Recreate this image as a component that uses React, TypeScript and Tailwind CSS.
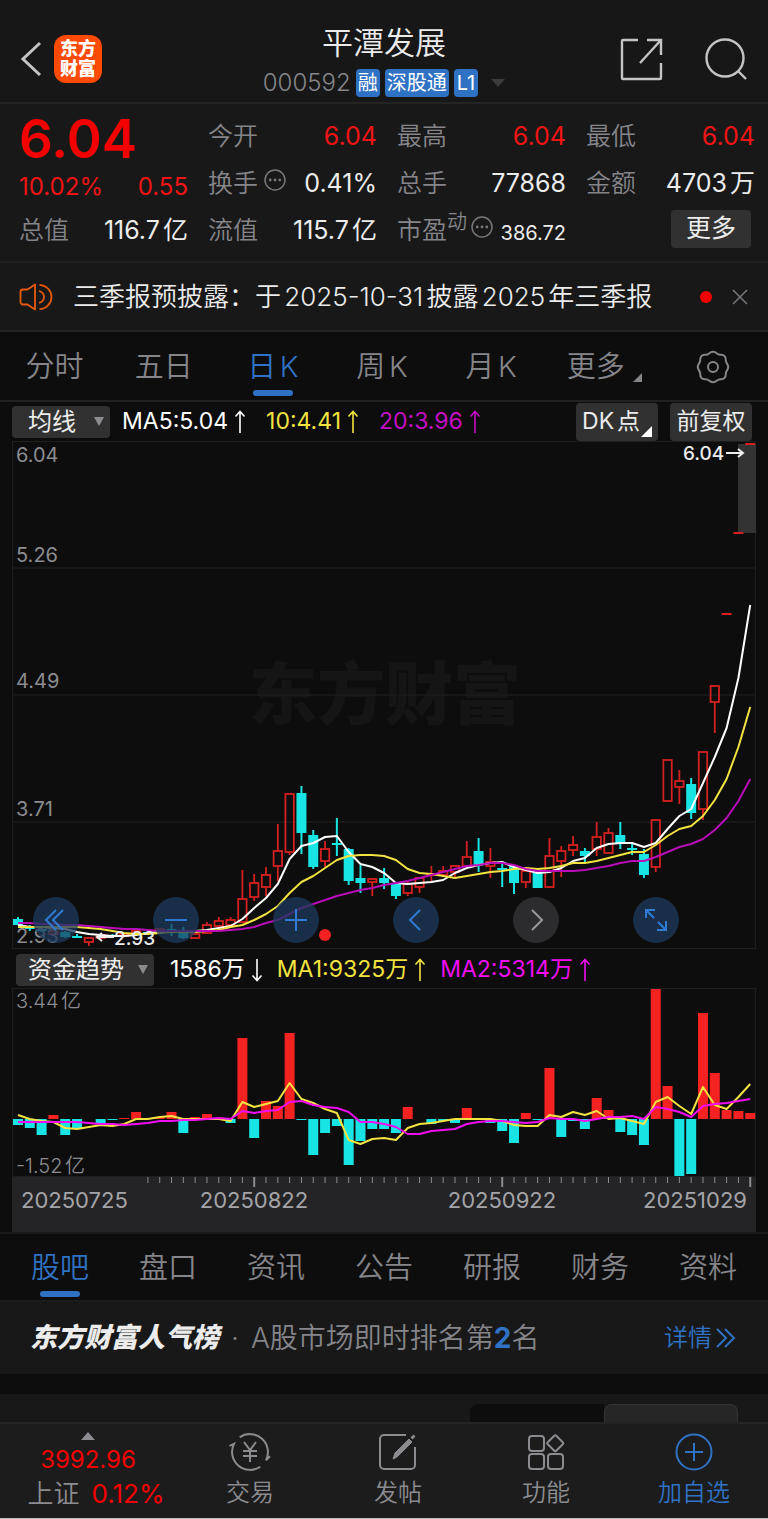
import { ReactNode } from 'react'

type Candle = [up: boolean, high: number, top: number, bottom: number, low: number]

const STEP = 11.81
const xAt = (i: number) => 6 + i * STEP

const candles: Candle[] = [
    [false, 476, 478, 484, 484], [false, 484, 485, 488, 490], [false, 487, 488, 490, 491], [true, 489, 490, 493, 493],
    [false, 490, 491, 496, 497], [false, 493, 495, 497, 497], [true, 496, 497, 501, 505], [true, 493, 494, 497, 498],
    [false, 493, 494, 496, 496], [true, 492, 493, 495, 496], [true, 489, 490, 493, 494], [false, 490, 491, 493, 494],
    [true, 487, 488, 490, 491], [false, 483, 488, 489, 495], [false, 486, 490, 497, 498], [true, 492, 493, 497, 498],
    [true, 481, 484, 492, 493], [true, 476, 480, 485, 486], [true, 476, 479, 484, 485], [true, 429, 458, 481, 482],
    [true, 433, 442, 456, 460], [true, 426, 434, 446, 455], [true, 383, 410, 425, 440], [true, 353, 353, 411, 414],
    [false, 345, 352, 392, 413], [false, 389, 394, 426, 428], [true, 400, 408, 420, 426], [false, 377, 402, 404, 415],
    [false, 407, 408, 440, 444], [false, 424, 437, 442, 452], [true, 437, 438, 441, 455], [false, 427, 437, 442, 448],
    [false, 441, 442, 455, 458], [true, 441, 443, 452, 455], [true, 436, 437, 446, 452], [true, 425, 433, 434, 440],
    [true, 425, 430, 434, 436], [true, 424, 425, 431, 436], [true, 400, 416, 425, 426], [false, 397, 410, 424, 431],
    [true, 407, 421, 425, 437], [false, 422, 427, 429, 446], [false, 424, 425, 442, 453], [true, 428, 430, 441, 447],
    [false, 430, 431, 447, 447], [true, 397, 415, 446, 447], [true, 405, 410, 420, 436], [true, 395, 404, 409, 415],
    [false, 407, 410, 415, 422], [true, 381, 396, 408, 415], [true, 387, 392, 412, 412], [false, 381, 394, 403, 408],
    [false, 402, 407, 409, 414], [false, 408, 413, 434, 437], [true, 378, 379, 426, 431], [true, 319, 319, 360, 361],
    [true, 329, 340, 346, 363], [false, 337, 343, 372, 378], [true, 311, 311, 368, 379], [true, 245, 245, 261, 292],
    [true, 173, 173, 173, 173], [true, 92, 92, 92, 92], [true, 3, 3, 3, 3],
]

const ma5 = [484, 486, 486, 487, 488, 491, 493, 494, 495, 495, 494, 492, 491, 490, 491, 490, 489, 487, 485, 478, 467, 457, 443, 418, 405, 402, 396, 395, 411, 423, 426, 432, 442, 443, 442, 441, 439, 432, 427, 424, 422, 421, 426, 429, 432, 431, 427, 420, 417, 407, 403, 402, 402, 406, 402, 388, 375, 368, 342, 316, 287, 237, 164]
const ma10 = [486, 486, 486, 486, 486, 486, 487, 488, 490, 492, 493, 493, 492, 491, 491, 491, 490, 489, 486, 484, 479, 473, 465, 452, 441, 435, 427, 419, 415, 414, 414, 415, 419, 428, 432, 433, 435, 437, 435, 433, 431, 430, 428, 427, 428, 427, 425, 422, 422, 420, 417, 414, 411, 411, 404, 395, 388, 385, 375, 359, 338, 306, 266]
const ma20 = [482, 482, 483, 483, 484, 484, 485, 486, 487, 488, 488, 489, 490, 490, 490, 490, 490, 490, 489, 488, 486, 482, 479, 473, 467, 463, 459, 455, 452, 449, 447, 444, 442, 440, 437, 434, 431, 428, 425, 424, 422, 422, 424, 428, 430, 430, 430, 430, 429, 427, 425, 422, 420, 420, 416, 411, 406, 403, 398, 389, 377, 360, 338]

const flow = [-6, -9, -16, 4, -16, -10, 0, -4, -1, 1, 7, 0, 2, 7, -14, 2, 5, 0, -4, 81, -19, 18, 13, 86, -1, -36, -14, -7, -46, -22, -10, -10, -14, 12, 0, -5, -2, -4, 11, -1, -4, -12, -24, 6, -1, 51, -18, -2, -10, 21, 9, -13, -16, -26, 130, 33, -57, -55, 106, 46, 9, 8, 6]
const flowMa1 = [127, 131, 133, 134, 140, 141, 139, 137, 138, 136, 131, 131, 129, 128, 131, 131, 131, 131, 133, 114, 119, 116, 113, 95, 111, 115, 121, 125, 152, 156, 151, 150, 152, 140, 136, 135, 133, 131, 131, 131, 131, 133, 137, 138, 138, 127, 129, 124, 127, 123, 131, 130, 133, 136, 114, 109, 118, 126, 99, 117, 121, 109, 96]
const flowMa2 = [134, 134, 134, 134, 134, 134, 135, 136, 136, 137, 136, 135, 133, 133, 132, 132, 131, 130, 131, 123, 125, 123, 122, 114, 113, 117, 119, 120, 124, 134, 134, 136, 139, 146, 146, 143, 142, 141, 136, 134, 133, 133, 134, 135, 134, 130, 131, 131, 133, 131, 129, 129, 128, 131, 119, 121, 124, 129, 118, 116, 115, 113, 111]

const toPoints = (values: number[]) => values.map((y, i) => `${xAt(i)},${y}`).join(' ')

function Arrow({ down }: { down?: boolean }) {
    return (
        <svg viewBox="0 0 12 24" className="h-6 w-3" fill="none" stroke="currentColor" strokeWidth="1.6">
            {down ? <path d="M6 1v21M1.5 17.5 6 22.5l4.5-5" /> : <path d="M6 23V2M1.5 6.5 6 1.5l4.5 5" />}
        </svg>
    )
}

function InfoDots() {
    return (
        <svg viewBox="0 0 22 22" className="mb-2 size-[22px] shrink-0" fill="none" stroke="#77777b" strokeWidth="1.5">
            <circle cx="11" cy="11" r="10" />
            <g fill="#77777b" stroke="none">
                <circle cx="6.2" cy="11" r="1.4" />
                <circle cx="11" cy="11" r="1.4" />
                <circle cx="15.8" cy="11" r="1.4" />
            </g>
        </svg>
    )
}

function Stat({ label, value, red, extra }: { label: string; value: string; red?: boolean; extra?: ReactNode }) {
    return (
        <div className="flex h-[47px] items-center justify-between whitespace-nowrap">
            <dt className="flex items-center gap-[6px] font-[350] text-[#85858a]">
                {label}
                {extra}
            </dt>
            <dd className={red ? 'text-[#f01414]' : 'text-[#ececec]'}>{value}</dd>
        </div>
    )
}

function Header() {
    return (
        <header className="grid h-[104px] grid-cols-[1fr_auto_1fr] items-center border-b-2 border-[#242424] bg-[#171717] px-5 pt-4">
            <div className="flex items-center gap-3">
                <button aria-label="返回">
                    <svg viewBox="0 0 22 36" className="h-9 w-[22px]" fill="none" stroke="#c4c4c4" strokeWidth="3">
                        <path d="M20 2 3 18l17 16" />
                    </svg>
                </button>
                <a href="#home" className="flex size-12 flex-col items-center justify-center rounded-xl bg-[#fd4a06] text-lg leading-5 font-black text-white">
                    <span>东方</span>
                    <span>财富</span>
                </a>
            </div>
            <div className="mt-1 flex flex-col items-center">
                <h1 className="text-[31px] leading-11 font-[350] text-[#ececec]">平潭发展</h1>
                <div className="flex h-9 items-center gap-[5px] text-xl text-white">
                    <span className="text-2xl font-light text-[#85858a]">000592</span>
                    <span className="rounded bg-[#2f72c3] px-0.5 leading-7">融</span>
                    <span className="rounded bg-[#2f72c3] px-0.5 leading-7">深股通</span>
                    <span className="rounded bg-[#2f72c3] px-[3px] leading-7">L1</span>
                    <svg viewBox="0 0 14 8" className="ml-2 h-2 w-3.5" fill="#3c3c3c">
                        <path d="M0 0h14L7 8z" />
                    </svg>
                </div>
            </div>
            <div className="flex items-center justify-end gap-10">
                <button aria-label="分享">
                    <svg viewBox="0 0 44 44" className="size-11" fill="none" stroke="#c4c4c4" strokeWidth="2.4">
                        <path d="M18 3H3a1 1 0 0 0-1 1v37a1 1 0 0 0 1 1h37a1 1 0 0 0 1-1V26M27 3h14v15M41 3 20 26" />
                    </svg>
                </button>
                <button aria-label="搜索">
                    <svg viewBox="0 0 44 44" className="size-11" fill="none" stroke="#c4c4c4" strokeWidth="2.4">
                        <circle cx="21" cy="21" r="18.5" />
                        <path d="m34 34 8 8" />
                    </svg>
                </button>
            </div>
        </header>
    )
}

function Quote() {
    return (
        <section className="grid grid-cols-4 gap-x-5 border-b-2 border-[#222] bg-[#181818] pt-[9px] pr-[13px] pb-[7px] pl-[19px] text-[25px] [text-autospace:normal]">
            <dl>
                <div className="flex h-[54px] items-center text-[53px] font-semibold text-[#f50000]">6.04</div>
                <div className="flex h-10 items-center justify-between text-2xl text-[#f01414]">
                    <span>10.02%</span>
                    <span>0.55</span>
                </div>
                <Stat label="总值" value="116.7亿" />
            </dl>
            <dl>
                <Stat label="今开" value="6.04" red />
                <Stat label="换手" value="0.41%" extra={<InfoDots />} />
                <Stat label="流值" value="115.7亿" />
            </dl>
            <dl>
                <Stat label="最高" value="6.04" red />
                <Stat label="总手" value="77868" />
                <div className="flex h-[47px] items-center justify-between whitespace-nowrap">
                    <dt className="flex items-center gap-1 font-[350] text-[#85858a]">
                        <span>
                            市盈<sup className="text-xl">动</sup>
                        </span>
                        <InfoDots />
                    </dt>
                    <dd className="pt-1 text-xl text-[#ececec]">386.72</dd>
                </div>
            </dl>
            <dl>
                <Stat label="最低" value="6.04" red />
                <Stat label="金额" value="4703万" />
                <div className="flex h-[47px] items-center justify-end pr-1 pb-1">
                    <button className="h-[38px] w-20 rounded bg-[#313131] text-[#ececec]">更多</button>
                </div>
            </dl>
        </section>
    )
}

function Notice() {
    return (
        <section className="flex h-[69px] items-center border-b-2 border-[#242424] bg-[#181818] pr-5 pl-[19px]">
            <svg viewBox="0 0 34 28" className="h-7 w-[34px] shrink-0" fill="none" stroke="#e8590c" strokeWidth="1.8">
                <path d="M16 1.5v25l-7.5-5H4A2.500 2.500 0 0 1 1.500 19V9A2.500 2.500 0 0 1 4 6.500h4.500z" strokeLinejoin="round" />
                <path d="M20 8c3.500 1 5 3.300 5 6s-1.500 5-5 6M20.500 1.800C28 2.500 32.500 8 32.500 14S28 25.500 20.500 26.200" />
            </svg>
            <p className="ml-5 flex-1 text-[26px] font-[350] whitespace-nowrap text-[#ececec] [text-autospace:normal]">三季报预披露：于2025-10-31披露2025年三季报</p>
            <span className="mr-5 size-3 rounded-full bg-[#f50000]" />
            <button aria-label="关闭">
                <svg viewBox="0 0 16 16" className="size-4" stroke="#77777b" strokeWidth="1.5">
                    <path d="m1 1 14 14M15 1 1 15" />
                </svg>
            </button>
        </section>
    )
}

function PeriodTabs() {
    return (
        <nav className="flex h-[70px] border-b-2 border-[#222] pt-0.5 text-[29px] font-[350] text-[#85858a] [text-autospace:normal]">
            {['分时', '五日', '日K', '周K', '月K'].map((name) => (
                <button key={name} className={name === '日K' ? 'relative flex-1 text-[#2f72c3]' : 'flex-1'}>
                    {name}
                    {name === '日K' && <span className="absolute bottom-1 left-1/2 h-[6px] w-10 -translate-x-1/2 rounded-full bg-[#2f72c3]" />}
                </button>
            ))}
            <button className="flex flex-1 items-center justify-center gap-2 pl-1">
                更多
                <svg viewBox="0 0 9 9" className="mt-5 size-[9px]" fill="#85858a">
                    <path d="M9 0v9H0z" />
                </svg>
            </button>
            <button aria-label="设置" className="flex flex-1 items-center justify-center">
                <svg viewBox="0 0 34 34" className="size-[34px]" fill="none" stroke="#85858a" strokeWidth="2" strokeLinejoin="round">
                    <path d="M13 3.500c2.500-2.200 5.500-2.200 8 0q1.800 1.500 3.800 1.300c3.500-.2 5 2.200 5 5.200q0 2 1.200 3.700c1.600 2.200 1.600 4.400 0 6.600q-1.200 1.700-1.200 3.700c0 3-1.500 5.400-5 5.200q-2-.2-3.800 1.300c-2.500 2.200-5.500 2.200-8 0q-1.800-1.500-3.800-1.300c-3.500.2-5-2.200-5-5.200q0-2-1.200-3.700c-1.600-2.200-1.600-4.400 0-6.600Q4.200 12 4.200 10c0-3 1.500-5.400 5-5.200q2 .2 3.800-1.300z" />
                    <circle cx="17" cy="17" r="5" />
                </svg>
            </button>
        </nav>
    )
}

function Picker({ label, option, wide }: { label: string; option: string; wide?: boolean }) {
    return (
        <span className="relative flex items-center">
            <select
                aria-label={label}
                className={`h-8 appearance-none rounded bg-[#313131] text-2xl leading-8 text-[#ececec] ${wide ? 'pr-[34px] pl-4' : 'pr-[30px] pl-3'}`}
            >
                <option>{option}</option>
            </select>
            <svg viewBox="0 0 10 9" className="pointer-events-none absolute right-[6px] h-[9px] w-[10px]" fill="#8c8c90">
                <path d="M0 0h10L5 9z" />
            </svg>
        </span>
    )
}

function PriceChart() {
    const grid = [127, 254, 381]
    return (
        <div className="relative mx-3">
            <svg viewBox="0 0 744 508" className="block w-full" fontFamily="Inter, sans-serif">
                <rect x="0.5" y="0.5" width="743" height="507" fill="none" stroke="#1e1e1e" />
                <text x="373" y="278" textAnchor="middle" fontSize="68" fontWeight="900" fill="#151515" fontFamily="Noto Sans CJK SC, sans-serif">东方财富</text>
                {grid.map((y) => (
                    <path key={y} d={`M0 ${y}h744`} stroke="#1b1b1b" strokeWidth="1.5" />
                ))}
                <rect x="726" y="3" width="18" height="89" fill="#333" />
                {candles.map(([up, high, top, bottom, low], i) => {
                    const x = xAt(i)
                    if (top === bottom) {
                        return <path key={i} d={`M${x - 5} ${top}h10`} stroke="#d42020" strokeWidth="2" />
                    }
                    return up ? (
                        <g key={i} fill="none" stroke="#d42020" strokeWidth="1.8">
                            <path d={`M${x} ${high}V${top}M${x} ${bottom}V${low}`} />
                            <rect x={x - 4.2} y={top} width="8.4" height={bottom - top} />
                        </g>
                    ) : (
                        <g key={i} fill="#18e4e4">
                            <rect x={x - 1} y={high} width="2" height={low - high} />
                            <rect x={x - 5} y={top} width="10" height={bottom - top} />
                        </g>
                    )
                })}
                <g fill="none" strokeWidth="2" strokeLinejoin="round">
                    <polyline points={toPoints(ma5)} stroke="#fff" />
                    <polyline points={toPoints(ma10)} stroke="#f2e340" />
                    <polyline points={toPoints(ma20)} stroke="#b80db8" />
                </g>
                <g fontSize="20" fill="#8c8c90">
                    <text x="4" y="21">6.04</text>
                    <text x="4" y="121">5.26</text>
                    <text x="4" y="247">4.49</text>
                    <text x="4" y="375">3.71</text>
                    <text x="4" y="502">2.93</text>
                </g>
                <g fontSize="19" fontWeight="500" fill="#ececec" stroke="none">
                    <text x="671" y="19">6.04</text>
                    <text x="102" y="504">2.93</text>
                </g>
                <g fill="none" stroke="#ececec" strokeWidth="2">
                    <path d="M714 12h16M726 8l5 4-5 4" />
                    <path d="M102 496H86M90 492l-5 4 5 4" />
                </g>
                <circle cx="313" cy="494" r="6" fill="#f52020" />
            </svg>
            <div className="absolute right-[77px] bottom-[6px] left-[21px] flex justify-between text-[#2f7bd4]">
                <ToolButton label="最早"><path d="M23 13l-10 10 10 10M30 13 20 23l10 10" /></ToolButton>
                <ToolButton label="缩小"><path d="M12 23h22" /></ToolButton>
                <ToolButton label="放大"><path d="M12 23h22M23 12v22" /></ToolButton>
                <ToolButton label="向前"><path d="M27 13 17 23l10 10" /></ToolButton>
                <ToolButton label="向后" muted><path d="m19 13 10 10-10 10" /></ToolButton>
                <ToolButton label="全屏"><path d="M13 21v-8h9M13 13l8 8M24 33h9v-9M33 33l-8-8" /></ToolButton>
            </div>
        </div>
    )
}

function ToolButton({ label, muted, children }: { label: string; muted?: boolean; children: ReactNode }) {
    return (
        <button aria-label={label} className={muted ? 'size-[46px] rounded-full bg-[#2c2c2e] text-[#98989c]' : 'size-[46px] rounded-full bg-[#1d3b5e]/75'}>
            <svg viewBox="0 0 46 46" fill="none" stroke="currentColor" strokeWidth="2">
                {children}
            </svg>
        </button>
    )
}

function FlowChart() {
    return (
        <div className="mx-3">
            <svg viewBox="0 0 744 189" className="block w-full" fontFamily="Inter, 'Noto Sans CJK SC', sans-serif">
                <rect x="0.5" y="0.5" width="743" height="188" fill="none" stroke="#1e1e1e" />
                {flow.map((v, i) => (
                    <rect key={i} x={xAt(i) - 5} y={v > 0 ? 131 - v : 131} width="10" height={Math.abs(v)} fill={v > 0 ? '#f52222' : '#18e4e4'} />
                ))}
                <g fill="none" strokeWidth="2" strokeLinejoin="round">
                    <polyline points={toPoints(flowMa1)} stroke="#f2e340" />
                    <polyline points={toPoints(flowMa2)} stroke="#f20df2" />
                </g>
                <g fontSize="20" fontWeight="350" fill="#8c8c90" className="[text-autospace:normal]">
                    <text x="4" y="20">3.44亿</text>
                    <text x="4" y="185">-1.52亿</text>
                </g>
            </svg>
            <svg viewBox="0 0 744 55" className="block w-full bg-[#242427]" fontFamily="Inter, sans-serif">
                {flow.map((_, i) => i > 10 && (
                    <path key={i} d={`M${xAt(i)} 0v${i % 21 === 20 ? 10 : 6}`} stroke="#8c8c90" strokeWidth={i % 21 === 20 ? 2 : 1} />
                ))}
                <g fontSize="22" fill="#a4a4a8">
                    <text x="9" y="31">20250725</text>
                    <text x="242" y="31" textAnchor="middle">20250822</text>
                    <text x="490" y="31" textAnchor="middle">20250922</text>
                    <text x="735" y="31" textAnchor="end">20251029</text>
                </g>
            </svg>
        </div>
    )
}

function BottomBar() {
    const item = 'flex flex-1 flex-col items-center gap-[5px] text-2xl font-[350]'
    return (
        <footer className="flex h-[97px] border-t-2 border-b border-t-[#242424] border-b-[#bdbdbd] bg-[#1c1c1c] pt-2 whitespace-nowrap text-[#8c8c90]">
            <a href="#index" className="flex w-44 flex-col items-center text-2xl text-[#f50000]">
                <svg viewBox="0 0 14 8" className="mb-0.5 h-2 w-3.5 shrink-0" fill="#8c8c90">
                    <path d="M7 0l7 8H0z" />
                </svg>
                <span className="leading-9">3992.96</span>
                <span className="flex items-center gap-3 pl-4 text-[26px] leading-8">
                    <span className="font-[350] text-[#8c8c90]">上证</span>
                    0.12%
                </span>
            </a>
            <button className={item}>
                <svg viewBox="0 0 44 40" className="h-10 w-11" fill="none" stroke="currentColor" strokeWidth="2">
                    <path d="M11.7 5.300A18 18 0 0 1 38 28.200l4-4M32.300 34.700A18 18 0 0 1 6 11.800l-4.500 2" />
                    <path d="m16 10 6 8 6-8M22 18v12M15 19h14M15 24h14" />
                </svg>
                交易
            </button>
            <button className={item}>
                <svg viewBox="0 0 40 40" className="size-10" fill="none" stroke="currentColor" strokeWidth="2">
                    <path d="M28 3H6a4 4 0 0 0-4 4v26a4 4 0 0 0 4 4h27a4 4 0 0 0 4-4V15" />
                    <path d="m15 27 2-6L31 7l3 3-15 15z" fill="currentColor" strokeWidth="1" />
                    <path d="m34 4 2 2" strokeWidth="4" />
                </svg>
                发帖
            </button>
            <button className={item}>
                <svg viewBox="0 0 40 40" className="size-10" fill="none" stroke="currentColor" strokeWidth="2">
                    <rect x="3" y="4" width="15" height="15" rx="3" />
                    <rect x="3" y="22" width="15" height="15" rx="3" />
                    <rect x="22" y="22" width="15" height="15" rx="3" />
                    <path d="M28.5 3.5a1 1 0 0 1 1.5 0l7 7a1 1 0 0 1 0 1.5l-7 7a1 1 0 0 1-1.5 0l-7-7a1 1 0 0 1 0-1.5z" />
                </svg>
                功能
            </button>
            <button className={`${item} text-[#2f72c3]`}>
                <svg viewBox="0 0 40 40" className="size-10" fill="none" stroke="currentColor" strokeWidth="2">
                    <circle cx="20" cy="20" r="17.5" />
                    <path d="M11 20h18M20 11v18" />
                </svg>
                加自选
            </button>
        </footer>
    )
}

export default function App() {
    return (
        <div className="min-w-[720px] bg-[#0d0d0d] font-[Inter,'Noto_Sans_CJK_SC',sans-serif]">
            <Header />
            <Quote />
            <Notice />
            <PeriodTabs />

            <div className="flex h-[39px] items-center pr-4 pl-3 text-[23px] whitespace-nowrap">
                <Picker label="主图指标" option="均线" wide />
                <span className="ml-3 flex items-center gap-[6px] text-white">MA5:5.04 <Arrow /></span>
                <span className="ml-5 flex items-center gap-[6px] text-[#f2e340]">10:4.41 <Arrow /></span>
                <span className="ml-5 flex items-center gap-[6px] text-[#c40fc4]">20:3.96 <Arrow /></span>
                <button className="relative ml-auto h-[38px] w-[82px] rounded bg-[#313131] pr-3 text-[#ececec] [text-autospace:normal]">
                    DK点
                    <svg viewBox="0 0 11 11" className="absolute right-[6px] bottom-1 size-[11px]" fill="#fff">
                        <path d="M11 0v11H0z" />
                    </svg>
                </button>
                <button className="ml-3 h-[38px] w-[82px] rounded bg-[#313131] text-[#ececec]">前复权</button>
            </div>
            <PriceChart />

            <div className="flex h-[39px] items-center pt-0.5 pl-4 text-[23px] whitespace-nowrap">
                <Picker label="副图指标" option="资金趋势" />
                <span className="ml-4 flex items-center gap-[6px] text-white">1586万 <Arrow down /></span>
                <span className="ml-[14px] flex items-center gap-[6px] text-[#f2e340]">MA1:9325万 <Arrow /></span>
                <span className="ml-[14px] flex items-center gap-[6px] text-[#f20df2]">MA2:5314万 <Arrow /></span>
            </div>
            <FlowChart />

            <nav className="flex h-[70px] border-y-2 border-[#1a1a1a] px-[6px] pt-0.5 text-[29px] font-[350] text-[#85858a]">
                {['股吧', '盘口', '资讯', '公告', '研报', '财务', '资料'].map((name) => (
                    <button key={name} className={name === '股吧' ? 'relative flex-1 text-[#2f72c3]' : 'flex-1'}>
                        {name}
                        {name === '股吧' && <span className="absolute bottom-[3px] left-1/2 h-[6px] w-10 -translate-x-1/2 rounded-full bg-[#2f72c3]" />}
                    </button>
                ))}
            </nav>

            <section className="flex h-[72px] items-center bg-[#181818] pr-8 pl-[30px] text-[28px] font-[350] whitespace-nowrap text-[#85858a]">
                <strong className="text-[27px] font-black text-[#ececec] italic">东方财富人气榜</strong>
                <span className="mx-3">·</span>
                <span>A股市场即时排名第<b className="font-bold text-[#2f72c3]">2</b>名</span>
                <a href="#rank" className="ml-auto flex items-center gap-1 text-2xl text-[#2f72c3]">
                    详情
                    <svg viewBox="0 0 20 20" className="size-5" fill="none" stroke="currentColor" strokeWidth="2">
                        <path d="m1 1 9 9-9 9M9 1l9 9-9 9" />
                    </svg>
                </a>
            </section>

            <section className="mt-5 flex justify-end bg-[#181818] pt-[10px] pr-[30px]">
                <span className="h-[18px] w-[134px] rounded-tl-lg bg-[#0d0d0d]" />
                <span className="h-[18px] w-[134px] rounded-t-lg border border-b-0 border-[#333] bg-[#262626]" />
            </section>
            <BottomBar />
        </div>
    )
}
